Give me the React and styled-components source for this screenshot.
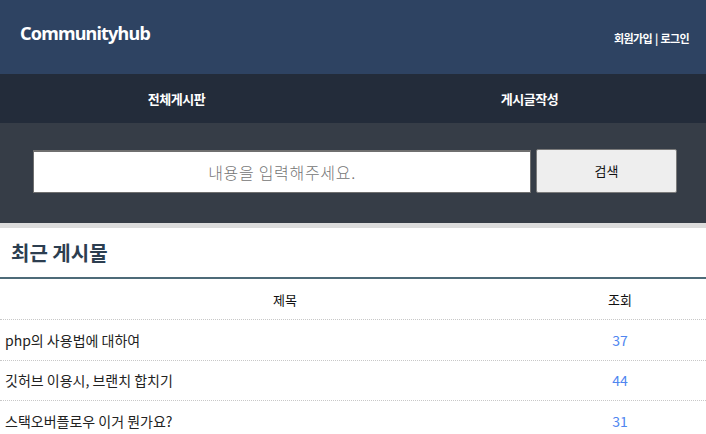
import styled, { createGlobalStyle } from 'styled-components'

const GlobalStyle = createGlobalStyle`
    body {
        margin: 0;
        font-family: "Noto Sans CJK KR", "Noto Sans", sans-serif;
        background: #fff;
    }
`

const Header = styled.header`
    display: flex;
    justify-content: space-between;
    align-items: center;
    height: 74px;
    padding: 0 17px 0 20px;
    box-sizing: border-box;
    background-color: #2e4362;
    color: #fff;
`
const Logo = styled.h1`
    margin: 0 0 8px;
    font-family: "Noto Sans", sans-serif;
    font-size: 18px;
    font-weight: 700;
    letter-spacing: -0.8px;
`
const UserLinks = styled.div`
    font-size: 11px;
    font-weight: 700;
    margin-top: 2px;
    letter-spacing: -0.6px;
    word-spacing: 1px;
`
const Nav = styled.nav`
    display: grid;
    grid-template-columns: 1fr 1fr;
    height: 49px;
    background-color: #232c3a;
`
const NavItem = styled.a`
    display: flex;
    justify-content: center;
    align-items: center;
    color: #fff;
    font-size: 13px;
    font-weight: 700;
    letter-spacing: -0.5px;
`
const SearchArea = styled.section`
    display: flex;
    align-items: center;
    gap: 5px;
    height: 105px;
    padding: 0 0 5px 33px;
    box-sizing: border-box;
    background-color: #363d47;
    border-bottom: 5px solid #dcdcdc;
`
const SearchInput = styled.input`
    width: 498px;
    height: 43px;
    margin-top: 1px;
    box-sizing: border-box;
    border: 1px solid #6f6f6f;
    border-top-width: 2px;
    background: #fff;
    text-align: center;
    font-family: "Noto Sans CJK KR", sans-serif;
    font-weight: 300;
    font-size: 16px;
    letter-spacing: 0.7px;
    &::placeholder {
        color: #757575;
    }
`
const SearchButton = styled.button`
    width: 141px;
    height: 44px;
    box-sizing: border-box;
    border: 1px solid #7a7a7a;
    border-radius: 2px;
    background: #eeeeee;
    color: #111;
    font-family: "Noto Sans CJK KR", sans-serif;
    font-size: 13px;
`
const Heading = styled.h2`
    margin: 0;
    height: 49px;
    padding-left: 11px;
    display: flex;
    align-items: center;
    font-size: 20px;
    font-weight: 700;
    color: #2c3e50;
    border-bottom: 2px solid #4e6b78;
`
const Row = styled.div`
    display: grid;
    grid-template-columns: 570px 100px 1fr;
    align-items: center;
    height: ${(p) => (p.$head ? 40 : 39.5)}px;
    border-bottom: 1px dotted #c8c8c8;
    &:last-child {
        border-bottom: none;
    }
`
const HeadCell = styled.div`
    text-align: center;
    font-size: 13px;
    color: #111;
`
const TitleCell = styled.div`
    padding-left: 5px;
    font-size: 14px;
    color: #222;
`
const ViewCell = styled.div`
    text-align: center;
    font-size: 14px;
    color: #4f86f0;
`

const posts = [
    { title: 'php의 사용법에 대하여', views: 37 },
    { title: '깃허브 이용시, 브랜치 합치기', views: 44 },
    { title: '스택오버플로우 이거 뭔가요?', views: 31 },
]

const App = () => {
    return (
        <>
            <GlobalStyle />
            <Header>
                <Logo>Communityhub</Logo>
                <UserLinks>회원가입 | 로그인</UserLinks>
            </Header>
            <Nav>
                <NavItem>전체게시판</NavItem>
                <NavItem>게시글작성</NavItem>
            </Nav>
            <SearchArea>
                <SearchInput placeholder="내용을 입력해주세요." />
                <SearchButton>검색</SearchButton>
            </SearchArea>
            <Heading>최근 게시물</Heading>
            <Row $head>
                <HeadCell>제목</HeadCell>
                <HeadCell>조회</HeadCell>
            </Row>
            {posts.map((p) => (
                <Row key={p.title}>
                    <TitleCell>{p.title}</TitleCell>
                    <ViewCell>{p.views}</ViewCell>
                </Row>
            ))}
        </>
    )
}

export default App
